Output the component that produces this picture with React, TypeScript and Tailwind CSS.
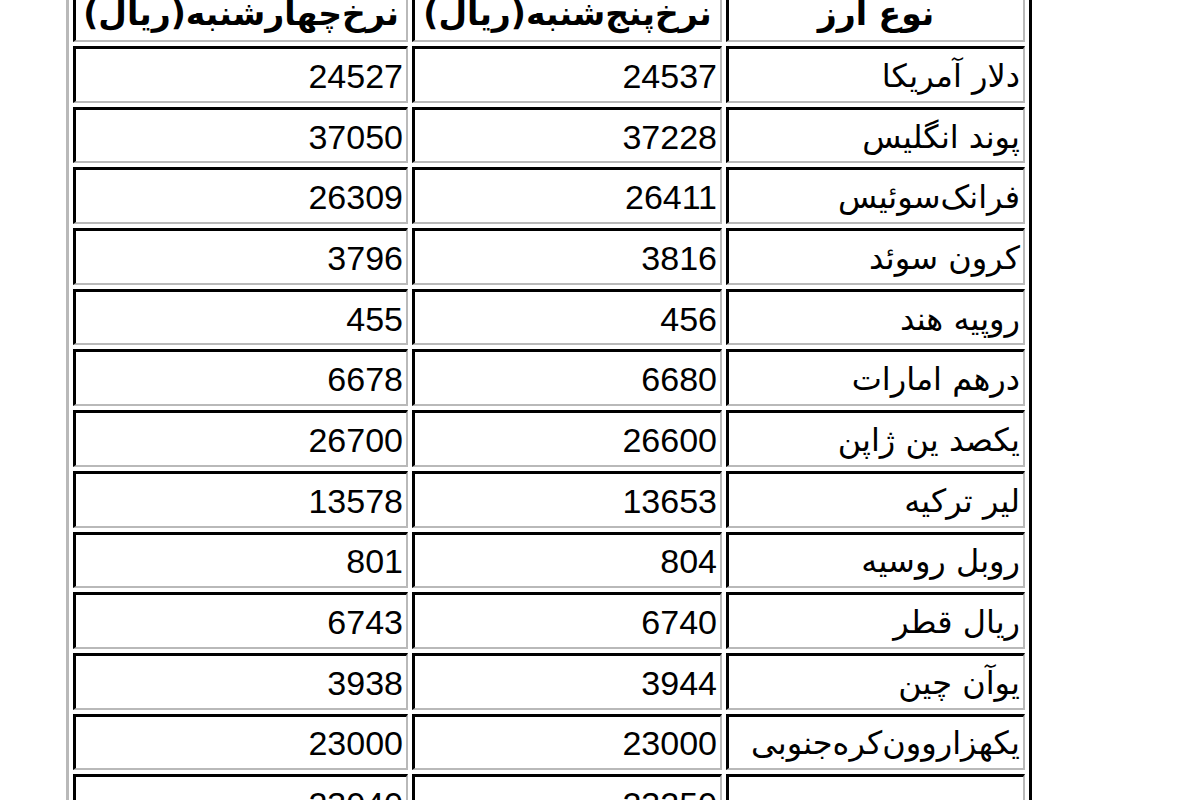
import React from "react";

const rows: [string, string, string][] = [
  ["دلار آمریکا", "24537", "24527"],
  ["پوند انگلیس", "37228", "37050"],
  ["فرانک‌سوئیس", "26411", "26309"],
  ["کرون سوئد", "3816", "3796"],
  ["روپیه هند", "456", "455"],
  ["درهم امارات", "6680", "6678"],
  ["یکصد ین ژاپن", "26600", "26700"],
  ["لیر ترکیه", "13653", "13578"],
  ["روبل روسیه", "804", "801"],
  ["ریال قطر", "6740", "6743"],
  ["یوآن چین", "3944", "3938"],
  ["یکهزاروون‌کره‌جنوبی", "23000", "23000"],
  ["", "23250", "23040"],
];

const cell =
  "h-[56.7px] box-border border-t-[3px] border-l-[3px] border-r-2 border-b-2 border-t-black border-l-black border-r-[#b9b9b9] border-b-[#b9b9b9] flex items-center overflow-hidden whitespace-nowrap";

const head = cell + " justify-center font-bold text-[33px] font-['DejaVu_Sans',sans-serif] tracking-[-0.5px]";
const num = cell + " justify-end pr-[3px] pt-[3px] text-[34px] font-['Liberation_Sans','DejaVu_Sans',sans-serif]";
const name = cell + " justify-start pr-[3px] pt-[2px] text-[32px] font-['DejaVu_Sans',sans-serif]";

export default function App() {
  return (
    <div className="w-[1200px] h-[800px] overflow-hidden bg-white">
      <div className="ml-[66px] mt-[-21.7px] w-fit border-[3px] border-l-[#b9b9b9] border-t-[#b9b9b9] border-r-black border-b-black p-[4px] text-black">
        <div className="grid grid-cols-[335px_310px_299px] auto-rows-[56.7px] gap-[4px]">
          <div className={head} dir="rtl">
            نرخ‌چهارشنبه(ریال)
          </div>
          <div className={head} dir="rtl">
            نرخ‌پنج‌شنبه(ریال)
          </div>
          <div className={head} dir="rtl">
            نوع ارز
          </div>
          {rows.map((r, i) => (
            <React.Fragment key={i}>
              <div className={num}>{r[2]}</div>
              <div className={num}>{r[1]}</div>
              <div className={name} dir="rtl">
                {r[0]}
              </div>
            </React.Fragment>
          ))}
        </div>
      </div>
    </div>
  );
}
